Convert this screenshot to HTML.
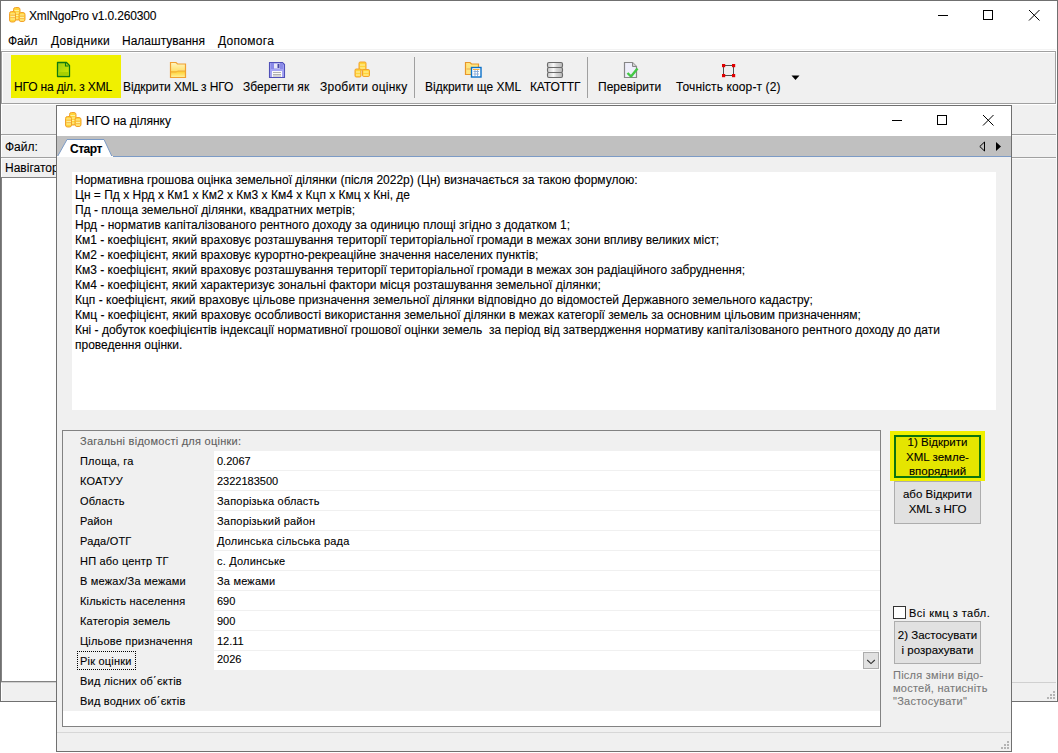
<!DOCTYPE html>
<html><head><meta charset="utf-8">
<style>
*{box-sizing:border-box;margin:0;padding:0}
html,body{width:1058px;height:753px;overflow:hidden;background:#fff;font-family:"Liberation Sans",sans-serif;font-size:12px;color:#000;-webkit-text-stroke:.1px}
.a{position:absolute}
.t{position:absolute;white-space:pre;line-height:15px;height:15px}
.g{position:absolute;white-space:pre;line-height:15px;height:15px;font-size:11px}
.b{position:absolute;text-align:center;line-height:14.5px;font-size:11.5px;white-space:nowrap}
.ln{position:absolute;background:#a0a0a0}
</style></head><body>
<!-- MAIN WINDOW -->
<div class="a" style="left:0;top:0;width:1058px;height:702px;border:1px solid #707070;background:#fff"></div>
<!-- title -->
<svg class="a" style="left:9px;top:7px" width="17" height="16" viewBox="0 0 17 16"><rect x="4.5" y="0.5" width="6.5" height="12.5" rx="2" fill="#ffd43a" stroke="#f2a22c"/><path d="M5.5 3.5H10M5.5 6H10M5.5 8.5H10M5.5 11H10" stroke="#fff3a0" stroke-width="1"/>
<rect x="0.5" y="4.5" width="6" height="10.5" rx="2" fill="#ffd43a" stroke="#f2a22c"/><path d="M1.5 7H6M1.5 9.5H6M1.5 12H6" stroke="#fff0a0" stroke-width="1"/><path d="M1.5 8H6M1.5 10.5H6" stroke="#f4b060" stroke-width=".6"/>
<rect x="10" y="5.5" width="6" height="9" rx="2" fill="#ffd43a" stroke="#f2a22c"/><path d="M11 8H15M11 10.5H15M11 13H15" stroke="#fff0a0" stroke-width="1"/><path d="M11 9H15M11 11.5H15" stroke="#f4b060" stroke-width=".6"/></svg>
<div class="t" style="left:29px;top:9px;letter-spacing:-.17px">XmlNgoPro v1.0.260300</div>
<!-- window buttons -->
<div class="a" style="left:938px;top:15px;width:10px;height:1px;background:#000"></div>
<div class="a" style="left:983px;top:10px;width:10px;height:10px;border:1px solid #000"></div>
<svg class="a" style="left:1028px;top:9px" width="13" height="13" viewBox="0 0 13 13"><path d="M1 1L11.5 11.5M11.5 1L1 11.5" stroke="#000" stroke-width="1"/></svg>
<!-- menu -->
<div class="t" style="left:8px;top:34px">Файл</div>
<div class="t" style="left:51px;top:34px;letter-spacing:.3px">Довідники</div>
<div class="t" style="left:122px;top:34px">Налаштування</div>
<div class="t" style="left:218px;top:34px;letter-spacing:.3px">Допомога</div>
<!-- toolbar -->
<div class="a" style="left:1px;top:49px;width:1055px;height:1px;background:#f3f3f3"></div>
<div class="a" style="left:1px;top:51px;width:1055px;height:53px;background:#f0f0f0;border:1px solid #a0a0a0;box-shadow:inset 1px 1px 0 #fff"></div>
<div class="a" style="left:11px;top:55px;width:110px;height:43px;background:#f0f000"></div>
<div class="t" style="left:14px;top:80px;letter-spacing:-.15px">НГО на діл. з XML</div>
<div class="t" style="left:123px;top:80px;letter-spacing:-.1px">Відкрити XML з НГО</div>
<div class="t" style="left:243px;top:80px;letter-spacing:.05px">Зберегти як</div>
<div class="t" style="left:320px;top:80px;letter-spacing:.25px">Зробити оцінку</div>
<div class="a" style="left:414px;top:57px;width:1px;height:41px;background:#a0a0a0"></div>
<div class="t" style="left:425px;top:80px">Відкрити ще XML</div>
<div class="t" style="left:530px;top:80px;letter-spacing:-.15px">КАТОТТГ</div>
<div class="a" style="left:587px;top:57px;width:1px;height:41px;background:#a0a0a0"></div>
<div class="t" style="left:598px;top:80px">Перевірити</div>
<div class="t" style="left:676px;top:80px;letter-spacing:.12px">Точність коор-т (2)</div>
<svg class="a" style="left:791px;top:75px" width="9" height="6"><path d="M0.5 0.5H8.5L4.5 5z" fill="#000"/></svg>


<!-- toolbar icons -->
<svg class="a" style="left:56px;top:61px" width="16" height="17" viewBox="0 0 16 17"><defs><linearGradient id="gd" x1="0" y1="0" x2="1" y2="1"><stop offset="0" stop-color="#9ccc10"/><stop offset="1" stop-color="#d8ec00"/></linearGradient></defs><path d="M1.5 1.5H10.5L13.5 4.5V15.5H1.5z" fill="url(#gd)" stroke="#0f7a0f" stroke-width="1.3" stroke-linejoin="round"/><path d="M9.5 2V5H12.5" fill="none" stroke="#0f7a0f" stroke-width="1.1"/><rect x="2.5" y="11" width="10" height="3" fill="#a8d000"/></svg>
<svg class="a" style="left:169px;top:61px" width="18" height="18" viewBox="0 0 18 18"><defs><linearGradient id="gf" x1="0" y1="0" x2="0" y2="1"><stop offset="0" stop-color="#fff6c0"/><stop offset=".55" stop-color="#ffe070"/><stop offset=".6" stop-color="#ffd030"/><stop offset="1" stop-color="#fff3a0"/></linearGradient></defs><path d="M1.5 1.5H7L8.5 3H16.5V16.5H1.5z" fill="url(#gf)" stroke="#f0a030" stroke-width="1.2"/><path d="M2 11H7.5L8.5 10H16" fill="none" stroke="#e8a040" stroke-width=".8"/></svg>
<svg class="a" style="left:268px;top:61px" width="18" height="18" viewBox="0 0 18 18"><path d="M1.5 1.5H14.5L16.5 3.5V16.5H1.5z" fill="#a4a4f4" stroke="#5050b8" stroke-width="1.1"/><rect x="3" y="2" width="12" height="6" fill="#8a8ae8"/><rect x="6" y="2.5" width="6" height="5" fill="#e8e8f8"/><rect x="9.5" y="3" width="2" height="4" fill="#4848a8"/><rect x="4" y="10" width="10" height="6" fill="#fafafa"/><path d="M5 11.5H13M5 13.5H13M5 15H13" stroke="#909090" stroke-width=".7"/></svg>
<svg class="a" style="left:354px;top:61px" width="17" height="17" viewBox="0 0 17 17"><rect x="5" y="1" width="7" height="8" rx="1.2" fill="#ffd43a" stroke="#f2a22c"/><path d="M6 4H11M6 7H11" stroke="#fff4b0" stroke-width="1.2"/><rect x="1" y="8" width="6" height="8" rx="1.2" fill="#ffd43a" stroke="#f2a22c"/><path d="M2 11H6M2 14H6" stroke="#fff4b0" stroke-width="1.2"/><rect x="8.5" y="8.5" width="7" height="7" rx="1.2" fill="#ffd43a" stroke="#f2a22c"/><path d="M9.5 11H14.5M9.5 14H14.5" stroke="#fff4b0" stroke-width="1.2"/></svg>
<svg class="a" style="left:464px;top:61px" width="19" height="18" viewBox="0 0 19 18"><path d="M1.5 1.5H6L7.5 3H14.5V13.5H1.5z" fill="#ffe680" stroke="#e8962a" stroke-width="1.2"/><path d="M2.5 8H14" stroke="#e8a040" stroke-width=".8"/><rect x="7.5" y="6.5" width="9.5" height="9.5" fill="#fff" stroke="#0a70c8" stroke-width="1.4"/><path d="M9 8.5H15.5" stroke="#f4b040" stroke-width="1"/><path d="M9.5 10.5H15M9.5 13H15M11 9V15M13.5 9V15" stroke="#88aad8" stroke-width=".9"/></svg>
<svg class="a" style="left:546px;top:61px" width="18" height="18" viewBox="0 0 18 18"><defs><linearGradient id="gg" x1="0" y1="0" x2="1" y2="0"><stop offset="0" stop-color="#c8c8c8"/><stop offset=".4" stop-color="#f8f8f8"/><stop offset=".6" stop-color="#d8d8d8"/><stop offset="1" stop-color="#b8b8b8"/></linearGradient></defs><rect x="1.5" y="1.5" width="15" height="5" rx="1.5" fill="url(#gg)" stroke="#6a6a6a" stroke-width="1.1"/><rect x="1.5" y="6.5" width="15" height="5" rx="1.5" fill="url(#gg)" stroke="#6a6a6a" stroke-width="1.1"/><rect x="1.5" y="11.5" width="15" height="5" rx="1.5" fill="url(#gg)" stroke="#6a6a6a" stroke-width="1.1"/></svg>
<svg class="a" style="left:623px;top:61px" width="17" height="18" viewBox="0 0 17 18"><path d="M1.5 1.5H9.5L13.5 5.5V16.5H1.5z" fill="#eeeefa" stroke="#868686" stroke-width="1.2"/><path d="M9.5 1.5V5.5H13.5" fill="#d0d0d0" stroke="#868686" stroke-width="1"/><path d="M4.5 12L8 15.5L14.5 7.5" fill="none" stroke="#44c844" stroke-width="2.4" stroke-linejoin="round"/></svg>
<svg class="a" style="left:721px;top:63px" width="16" height="16" viewBox="0 0 16 16"><path d="M2.5 2.5H12.5V12.5H2.5z" fill="none" stroke="#505050" stroke-width="1"/><rect x="1" y="1" width="3.2" height="3.2" fill="#e00000"/><rect x="11" y="1" width="3.2" height="3.2" fill="#e00000"/><rect x="1" y="11" width="3.2" height="3.2" fill="#e00000"/><rect x="11" y="11" width="3.2" height="3.2" fill="#e00000"/></svg>

<!-- main content area -->
<div class="a" style="left:1px;top:104px;width:1056px;height:597px;background:#f0f0f0;box-shadow:inset 1px 1px 0 #fff,inset -1px 0 0 #fafafa"></div>
<div class="a" style="left:1px;top:134px;width:1055px;height:1px;background:#a0a0a0"></div>
<div class="a" style="left:1px;top:135px;width:1055px;height:1px;background:#fafafa"></div>
<div class="t" style="left:5px;top:140px">Файл:</div>
<div class="a" style="left:1px;top:157px;width:1055px;height:1px;background:#a0a0a0"></div>
<div class="a" style="left:1px;top:158px;width:1055px;height:1px;background:#fafafa"></div>
<div class="t" style="left:5px;top:161px">Навігатор</div>
<div class="a" style="left:1px;top:177px;width:56px;height:505px;background:#fff;border-top:1px solid #828282;border-bottom:1px solid #828282;border-left:1px solid #828282"></div>
<div class="a" style="left:1px;top:682px;width:1055px;height:1px;background:#d0d0d0"></div>

<div class="a" style="left:1053px;top:691px;width:2px;height:2px;background:#b4b4b4"></div><div class="a" style="left:1050px;top:694px;width:2px;height:2px;background:#b4b4b4"></div><div class="a" style="left:1053px;top:694px;width:2px;height:2px;background:#b4b4b4"></div><div class="a" style="left:1047px;top:697px;width:2px;height:2px;background:#b4b4b4"></div><div class="a" style="left:1050px;top:697px;width:2px;height:2px;background:#b4b4b4"></div><div class="a" style="left:1053px;top:697px;width:2px;height:2px;background:#b4b4b4"></div>
<!-- DIALOG -->
<div class="a" style="left:56px;top:105px;width:956px;height:647px;border:1px solid #707070;background:#f0f0f0"></div>
<div class="a" style="left:57px;top:106px;width:954px;height:30px;background:#fff"></div>
<svg class="a" style="left:65px;top:112px" width="17" height="16" viewBox="0 0 17 16"><rect x="4.5" y="0.5" width="6.5" height="12.5" rx="2" fill="#ffd43a" stroke="#f2a22c"/><path d="M5.5 3.5H10M5.5 6H10M5.5 8.5H10M5.5 11H10" stroke="#fff3a0" stroke-width="1"/>
<rect x="0.5" y="4.5" width="6" height="10.5" rx="2" fill="#ffd43a" stroke="#f2a22c"/><path d="M1.5 7H6M1.5 9.5H6M1.5 12H6" stroke="#fff0a0" stroke-width="1"/><path d="M1.5 8H6M1.5 10.5H6" stroke="#f4b060" stroke-width=".6"/>
<rect x="10" y="5.5" width="6" height="9" rx="2" fill="#ffd43a" stroke="#f2a22c"/><path d="M11 8H15M11 10.5H15M11 13H15" stroke="#fff0a0" stroke-width="1"/><path d="M11 9H15M11 11.5H15" stroke="#f4b060" stroke-width=".6"/></svg>
<div class="t" style="left:86px;top:114px">НГО на ділянку</div>
<div class="a" style="left:892px;top:120px;width:10px;height:1px;background:#000"></div>
<div class="a" style="left:937px;top:115px;width:10px;height:10px;border:1px solid #000"></div>
<svg class="a" style="left:982px;top:114px" width="13" height="13" viewBox="0 0 13 13"><path d="M1 1L11.5 11.5M11.5 1L1 11.5" stroke="#000" stroke-width="1"/></svg>
<!-- tabs -->
<div class="a" style="left:57px;top:136px;width:954px;height:20px;background:#c0c0c0"></div>
<div class="a" style="left:57px;top:156px;width:954px;height:1px;background:#7c9bc6"></div>
<svg class="a" style="left:57px;top:139px" width="56" height="18"><path d="M0.5 17.5L10 0.5H47L55 17.5z" fill="#fff" stroke="#7c9bc6"/><rect x="0" y="17" width="56" height="1" fill="#fff"/></svg>
<div class="t" style="left:70px;top:142px;font-weight:bold;letter-spacing:-.5px">Старт</div>
<svg class="a" style="left:979px;top:141px" width="24" height="11"><path d="M5.5 1V10L0.8 5.5z" fill="none" stroke="#000"/><path d="M17 1V10L22 5.5z" fill="#000"/></svg>

<!-- textarea -->
<div class="a" style="left:72px;top:172px;width:924px;height:238px;background:#fff"></div>
<div class="a" style="left:75px;top:173px;line-height:15px;white-space:pre">Нормативна грошова оцінка земельної ділянки (після 2022р) (Цн) визначається за такою формулою:
Цн = Пд х Нрд х Км1 х Км2 х Км3 х Км4 х Кцп х Кмц х Кні, де
Пд - площа земельної ділянки, квадратних метрів;
Нрд - норматив капіталізованого рентного доходу за одиницю площі згідно з додатком 1;
Км1 - коефіцієнт, який враховує розташування території територіальної громади в межах зони впливу великих міст;
Км2 - коефіцієнт, який враховує курортно-рекреаційне значення населених пунктів;
Км3 - коефіцієнт, який враховує розташування території територіальної громади в межах зон радіаційного забруднення;
Км4 - коефіцієнт, який характеризує зональні фактори місця розташування земельної ділянки;
Кцп - коефіцієнт, який враховує цільове призначення земельної ділянки відповідно до відомостей Державного земельного кадастру;
Кмц - коефіцієнт, який враховує особливості використання земельної ділянки в межах категорії земель за основним цільовим призначенням;
Кні - добуток коефіцієнтів індексації нормативної грошової оцінки земель  за період від затвердження нормативу капіталізованого рентного доходу до дати
проведення оцінки.</div>

<!-- property grid -->
<div class="a" style="left:62px;top:430px;width:819px;height:297px;border:1px solid #828282;background:#fff"></div>
<div class="a" style="left:63px;top:431px;width:817px;height:280px;background:#f0f0f0"></div>
<div class="g" style="left:80px;top:434px;color:#5e5e5e;letter-spacing:.25px">Загальні відомості для оцінки:</div>
<div class="a" style="left:214px;top:451px;width:666px;height:19px;background:#fff"></div>
<div class="g" style="left:80px;top:454px;letter-spacing:.2px">Площа, га</div>
<div class="g" style="left:217px;top:454px">0.2067</div>
<div class="a" style="left:214px;top:471px;width:666px;height:19px;background:#fff"></div>
<div class="g" style="left:80px;top:474px;letter-spacing:.2px">КОАТУУ</div>
<div class="g" style="left:217px;top:474px">2322183500</div>
<div class="a" style="left:214px;top:491px;width:666px;height:19px;background:#fff"></div>
<div class="g" style="left:80px;top:494px;letter-spacing:.2px">Область</div>
<div class="g" style="left:217px;top:494px;letter-spacing:.2px">Запорізька область</div>
<div class="a" style="left:214px;top:511px;width:666px;height:19px;background:#fff"></div>
<div class="g" style="left:80px;top:514px;letter-spacing:.2px">Район</div>
<div class="g" style="left:217px;top:514px;letter-spacing:.2px">Запорізький район</div>
<div class="a" style="left:214px;top:531px;width:666px;height:19px;background:#fff"></div>
<div class="g" style="left:80px;top:534px;letter-spacing:.2px">Рада/ОТГ</div>
<div class="g" style="left:217px;top:534px;letter-spacing:.2px">Долинська сільська рада</div>
<div class="a" style="left:214px;top:551px;width:666px;height:19px;background:#fff"></div>
<div class="g" style="left:80px;top:554px;letter-spacing:.2px">НП або центр ТГ</div>
<div class="g" style="left:217px;top:554px;letter-spacing:.2px">с. Долинське</div>
<div class="a" style="left:214px;top:571px;width:666px;height:19px;background:#fff"></div>
<div class="g" style="left:80px;top:574px;letter-spacing:.2px">В межах/За межами</div>
<div class="g" style="left:217px;top:574px;letter-spacing:.2px">За межами</div>
<div class="a" style="left:214px;top:591px;width:666px;height:19px;background:#fff"></div>
<div class="g" style="left:80px;top:594px;letter-spacing:.2px">Кількість населення</div>
<div class="g" style="left:217px;top:594px">690</div>
<div class="a" style="left:214px;top:611px;width:666px;height:19px;background:#fff"></div>
<div class="g" style="left:80px;top:614px;letter-spacing:.2px">Категорія земель</div>
<div class="g" style="left:217px;top:614px">900</div>
<div class="a" style="left:214px;top:631px;width:666px;height:19px;background:#fff"></div>
<div class="g" style="left:80px;top:634px;letter-spacing:.2px">Цільове призначення</div>
<div class="g" style="left:217px;top:634px">12.11</div>
<div class="a" style="left:214px;top:651px;width:666px;height:19px;background:#fff"></div>
<div class="g" style="left:80px;top:654px;letter-spacing:.2px">Рік оцінки</div>
<div class="g" style="left:217px;top:652px">2026</div>
<div class="a" style="left:77px;top:651px;width:59px;height:19px;border:1px dotted #000"></div>
<div class="a" style="left:863px;top:652px;width:16px;height:17px;background:#e1e1e1;border:1px solid #adadad"></div>
<svg class="a" style="left:866px;top:659px" width="10" height="6"><path d="M1.2 1L5 4.6L8.8 1" fill="none" stroke="#333" stroke-width="1.1"/></svg>
<div class="g" style="left:80px;top:674px;letter-spacing:.2px">Вид лісних об΄єктів</div>
<div class="g" style="left:80px;top:694px;letter-spacing:.2px">Вид водних об΄єктів</div>
<!-- right buttons -->
<div class="a" style="left:890px;top:431px;width:95px;height:50px;background:#f0f000"></div>
<div class="a" style="left:894px;top:435px;width:87px;height:43px;background:#e5e500;border:2px solid #0d750d"></div>
<div class="a" style="left:894px;top:481px;width:87px;height:43px;background:#e1e1e1;border:1px solid #adadad"></div>
<div class="a" style="left:893px;top:606px;width:13px;height:13px;background:#fff;border:1px solid #333"></div>
<div class="g" style="left:909px;top:606px;letter-spacing:.45px">Всі кмц з табл.</div>
<div class="a" style="left:894px;top:621px;width:87px;height:43px;background:#e1e1e1;border:1px solid #adadad"></div>


<div class="b" style="left:894px;top:435px;width:87px">1) Відкрити<br>XML земле-<br>впорядний</div>
<div class="b" style="left:894px;top:487px;width:87px">або Відкрити<br>XML з НГО</div>
<div class="b" style="left:894px;top:628px;width:87px">2) Застосувати<br>і розрахувати</div>
<div class="a" style="left:893px;top:669px;font-size:11px;line-height:13.2px;color:#787878;white-space:pre;letter-spacing:.25px">Після зміни відо-
мостей, натисніть
"Застосувати"</div>
<!-- dialog status -->
<div class="a" style="left:57px;top:732px;width:954px;height:1px;background:#d7d7d7"></div>
<div class="a" style="left:1007px;top:741px;width:2px;height:2px;background:#b4b4b4"></div><div class="a" style="left:1004px;top:744px;width:2px;height:2px;background:#b4b4b4"></div><div class="a" style="left:1007px;top:744px;width:2px;height:2px;background:#b4b4b4"></div><div class="a" style="left:1001px;top:747px;width:2px;height:2px;background:#b4b4b4"></div><div class="a" style="left:1004px;top:747px;width:2px;height:2px;background:#b4b4b4"></div><div class="a" style="left:1007px;top:747px;width:2px;height:2px;background:#b4b4b4"></div>
</body></html>
